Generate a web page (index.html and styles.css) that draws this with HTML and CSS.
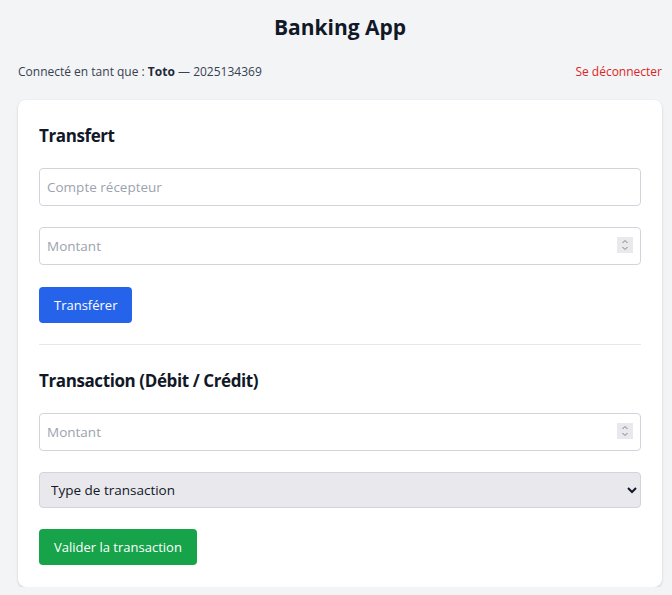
FILE: index.html
```html
<!DOCTYPE html>
<html lang="fr">
<head>
<meta charset="utf-8">
<title>Banking App</title>
<link rel="stylesheet" href="styles.css">
</head>
<body>
<div class="page">
  <h1 class="title">Banking App</h1>
  <div class="userbar">
    <span class="who">Connecté en tant que : <strong>Toto</strong> — 2025134369</span>
    <a class="logout" href="#">Se déconnecter</a>
  </div>
  <div class="card">
    <h2 class="section-title">Transfert</h2>
    <input class="field" type="text" placeholder="Compte récepteur">
    <input class="field" type="number" placeholder="Montant">
    <button class="btn btn-blue">Transférer</button>
    <hr class="divider">
    <h2 class="section-title">Transaction (Débit / Crédit)</h2>
    <input class="field" type="number" placeholder="Montant">
    <select class="field select">
      <option>Type de transaction</option>
      <option>Débit</option>
      <option>Crédit</option>
    </select>
    <button class="btn btn-green">Valider la transaction</button>
  </div>
</div>
</body>
</html>
```
FILE: styles.css
```css
html, body {
  margin: 0;
  padding: 0;
  background: #f3f4f6;
}
body {
  font-family: "Open Sans", "Noto Sans", sans-serif;
  color: #111827;
}
.page {
  padding: 0 10px 0 18px;
}
.title {
  margin: 0;
  padding-top: 12px;
  font-size: 21px;
  line-height: 30px;
  font-weight: 700;
  text-align: center;
  color: #111827;
}
.userbar {
  display: flex;
  justify-content: space-between;
  align-items: center;
  margin-top: 19px;
  height: 20px;
  font-size: 12px;
  color: #374151;
}
.userbar strong {
  color: #1f2937;
  font-weight: 700;
}
.logout {
  color: #dc2626;
  text-decoration: none;
}
.card {
  margin-top: 19px;
  background: #ffffff;
  border-radius: 8px;
  box-shadow: 0 1px 3px rgba(0,0,0,0.12), 0 1px 2px rgba(0,0,0,0.06);
  padding: 22px 21px 22px 21px;
  display: flex;
  flex-direction: column;
  align-items: flex-start;
}
.section-title {
  margin: 0 0 18px 0;
  font-size: 17px;
  line-height: 28px;
  font-weight: 700;
  letter-spacing: -0.4px;
  color: #111827;
}
.field {
  box-sizing: border-box;
  width: 100%;
  height: 38px;
  margin: 0 0 21px 0;
  padding: 0 7px;
  border: 1px solid #d1d5db;
  border-radius: 4px;
  font-family: inherit;
  font-size: 13.5px;
  color: #111827;
  background: #ffffff;
}
.field::placeholder {
  color: #9ca3af;
}
.field::-webkit-inner-spin-button {
  -webkit-appearance: none;
  appearance: none;
  opacity: 1;
  width: 16px;
  height: 16px;
  margin: 0;
  background: #e9e9ed url("data:image/svg+xml,%3Csvg xmlns='http://www.w3.org/2000/svg' width='16' height='16' viewBox='0 0 16 16'%3E%3Cpath d='M5.5 6 L8 3.5 L10.5 6 M5.5 10 L8 12.5 L10.5 10' fill='none' stroke='%23808080' stroke-width='1'/%3E%3C/svg%3E") center / 16px 16px no-repeat;
}
.select {
  height: 36px;
  margin-bottom: 20px;
  background: #e9e9ed;
  color: #111827;
}
.btn {
  height: 36px;
  padding: 0 15px;
  border: none;
  border-radius: 4px;
  font-family: inherit;
  font-size: 13px;
  color: #ffffff;
  margin: 1px 0 0 0;
}
.btn-blue {
  background: #2563eb;
}
.btn-green {
  background: #16a34a;
}
.divider {
  align-self: stretch;
  border: none;
  border-top: 1px solid #e5e7eb;
  margin: 21px 0 22px 0;
  height: 0;
}
```
